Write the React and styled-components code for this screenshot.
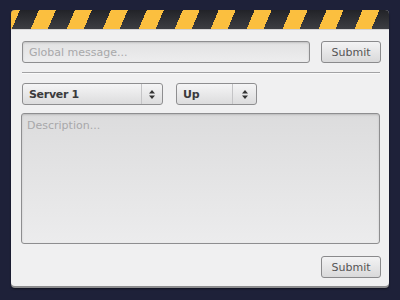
import React from 'react';
import styled, { createGlobalStyle } from 'styled-components';

const GlobalStyle = createGlobalStyle`
  html, body {
    margin: 0;
    padding: 0;
    background: #1e2139;
  }
  body {
    font-family: "DejaVu Sans", "Liberation Sans", sans-serif;
  }
`;

const Page = styled.div`
  width: 400px;
  height: 300px;
  padding: 10px 11px;
  box-sizing: border-box;
`;

const Card = styled.div`
  width: 378px;
  height: 276px;
  display: flex;
  flex-direction: column;
  background: #f0f0f1;
  border-radius: 4px;
  box-shadow: 0 2px 0 #8c8c8e, 0 3px 2px rgba(0, 0, 0, 0.5);
`;

const Stripes = styled.div`
  height: 19px;
  flex: none;
  border-radius: 4px 4px 0 0;
  background:
    repeating-linear-gradient(
      113deg,
      #fbbf3f 0px,
      #fbbf3f 8.2px,
      transparent 8.2px,
      transparent 25.7px,
      #fbbf3f 25.7px,
      #fbbf3f 33.1px
    ),
    linear-gradient(#222328, #3c3d42);
  border-bottom: 1px solid #d4d4d6;
`;

const Body = styled.div`
  flex: 1;
  display: flex;
  flex-direction: column;
  padding: 11px 8px 9px 11px;
`;

const Row = styled.div`
  display: flex;
  align-items: center;
  gap: ${p => p.gap || 11}px;
  justify-content: ${p => (p.end ? 'flex-end' : 'flex-start')};
  margin-top: ${p => p.top || 0}px;
`;

const TextInput = styled.input`
  flex: 1;
  height: 22px;
  box-sizing: border-box;
  border: 1px solid #8e8e90;
  border-radius: 3px;
  background: linear-gradient(#e2e2e3, #ededee);
  box-shadow: inset 0 1px 2px rgba(0, 0, 0, 0.15);
  padding: 0 6px;
  margin: 0;
  font-family: inherit;
  font-size: 11px;
  color: #444;
  outline: none;
  &::placeholder {
    color: #a8a8aa;
  }
`;

const Button = styled.button`
  width: 60px;
  height: 22px;
  margin: 0 0 0 auto;
  padding: 0;
  box-sizing: border-box;
  border: 1px solid #8a8a8c;
  border-radius: 3px;
  background: linear-gradient(#f3f3f4, #d9d9da);
  font-family: inherit;
  font-size: 11px;
  color: #555;
  flex: none;
`;

const Divider = styled.hr`
  border: 0;
  height: 1px;
  background: #a2a2a4;
  box-shadow: 0 1px 0 #fafafa;
  margin: 9px 1px 10px 0;
`;

const Select = styled.div`
  width: ${p => p.width}px;
  height: 22px;
  box-sizing: border-box;
  display: flex;
  align-items: stretch;
  border: 1px solid #8e8e90;
  border-radius: 3px;
  background: linear-gradient(#f5f5f6, #dcdcdd);
  font-size: 11px;
  font-weight: bold;
  color: #3a3a3c;
`;

const Value = styled.span`
  flex: 1;
  display: flex;
  align-items: center;
  padding-left: 6px;
  letter-spacing: -0.3px;
`;

const ArrowBox = styled.span`
  width: ${p => p.width}px;
  display: flex;
  align-items: center;
  justify-content: center;
  border-left: 1px solid #c4c4c6;
`;

const TextArea = styled.textarea`
  display: block;
  margin: 8px 1px 0 -1px;
  height: 131px;
  box-sizing: border-box;
  border: 1px solid #8e8e90;
  border-radius: 3px;
  background: linear-gradient(#dcdcdd, #ececed);
  box-shadow: inset 0 1px 2px rgba(0, 0, 0, 0.15);
  padding: 5px 5px;
  font-family: inherit;
  font-size: 11px;
  resize: none;
  outline: none;
  &::placeholder {
    color: #a8a8aa;
  }
`;

const Arrows = () => (
  <svg width="6" height="9" viewBox="0 0 6 9">
    <path d="M3 0 L6 3.5 L0 3.5 Z M3 9 L6 5.5 L0 5.5 Z" fill="#333" />
  </svg>
);

const App = () => (
  <Page>
    <GlobalStyle />
    <Card>
      <Stripes />
      <Body>
        <Row>
          <TextInput placeholder="Global message..." />
          <Button>Submit</Button>
        </Row>
        <Divider />
        <Row gap={13}>
          <Select width={141}>
            <Value>Server 1</Value>
            <ArrowBox width={20}>
              <Arrows />
            </ArrowBox>
          </Select>
          <Select width={81}>
            <Value>Up</Value>
            <ArrowBox width={23}>
              <Arrows />
            </ArrowBox>
          </Select>
        </Row>
        <TextArea placeholder="Description..." />
        <Row end top={12}>
          <Button>Submit</Button>
        </Row>
      </Body>
    </Card>
  </Page>
);

export default App;
